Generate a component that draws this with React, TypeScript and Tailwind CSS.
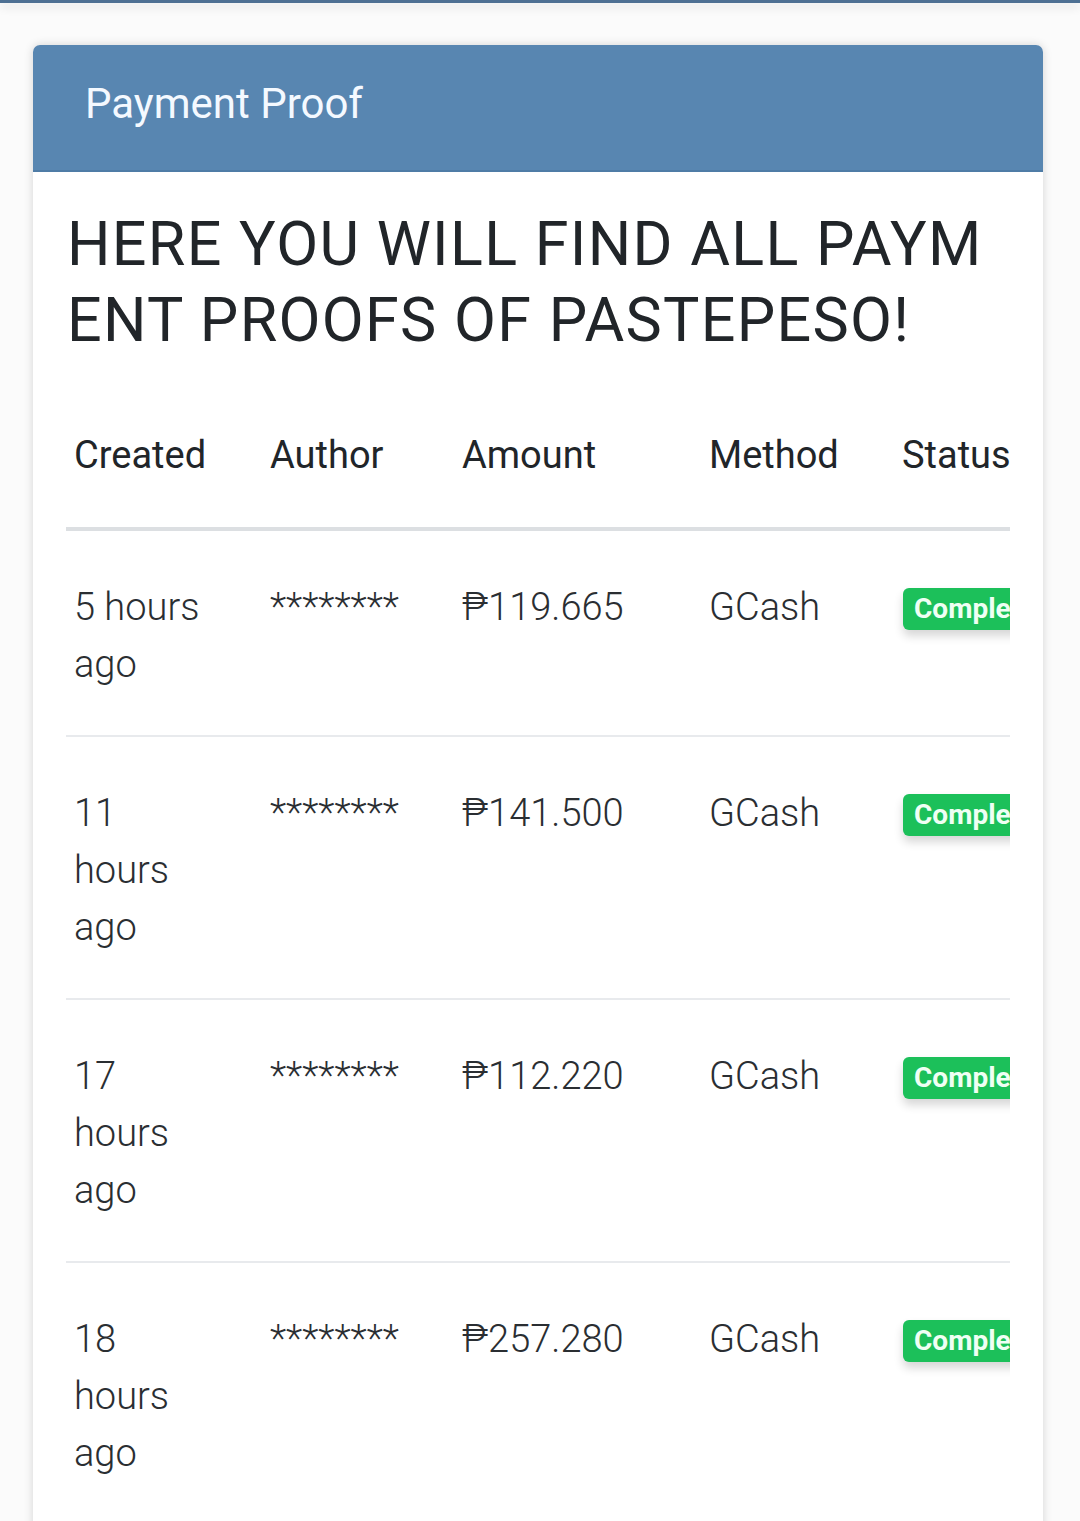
import React from 'react';

interface ProofRow {
  created: string;
  author: string;
  amount: string;
  method: string;
  status: string;
}

const rows: ProofRow[] = [
  { created: '5 hours ago', author: '********', amount: '₱119.665', method: 'GCash', status: 'Completed' },
  { created: '11 hours ago', author: '********', amount: '₱141.500', method: 'GCash', status: 'Completed' },
  { created: '17 hours ago', author: '********', amount: '₱112.220', method: 'GCash', status: 'Completed' },
  { created: '18 hours ago', author: '********', amount: '₱257.280', method: 'GCash', status: 'Completed' },
];

const font = { fontFamily: 'Roboto, "Noto Sans", "DejaVu Sans", sans-serif' };

function StatusBadge({ label }: { label: string }) {
  return (
    <span className="inline-block rounded-[6px] bg-[#1cc05a] px-[11px] py-[7px] align-top text-[28px] font-bold leading-none text-[#effff4] shadow-[0_6px_10px_rgba(0,0,0,0.16)]">
      {label}
    </span>
  );
}

export default function App() {
  return (
    <div className="min-h-[1521px] overflow-hidden bg-[#fbfbfb]" style={font}>
      <div className="h-[3px] bg-[#4e7093] shadow-[0_4px_10px_rgba(0,0,0,0.14)]" />

      <div className="ml-[33px] mt-[42px] w-[1010px] overflow-hidden rounded-t-[7px] bg-white shadow-[0_0_10px_rgba(0,0,0,0.16)]">
        <div className="flex h-[127px] items-center border-b-2 border-[#4f7ca6] bg-[#5886b1] pb-[7px] pl-[52px]">
          <h2 className="text-[42px] leading-none text-[#f4f9ff]">Payment Proof</h2>
        </div>

        <div className="px-[33px] pt-[34px] pb-[40px]">
          <h1 className="mb-[22px] break-all pl-[1px] text-[61px] leading-[76px] tracking-[1.3px] text-[#212529]">
            HERE YOU WILL FIND ALL PAYMENT PROOFS OF PASTEPESO!
          </h1>

          <div className="w-[944px] overflow-hidden">
            <table className="w-[1018px] table-fixed border-collapse text-[38px] leading-[57px] text-[#212529]">
              <colgroup>
                <col className="w-[196px]" />
                <col className="w-[192px]" />
                <col className="w-[247px]" />
                <col className="w-[193px]" />
                <col className="w-[190px]" />
              </colgroup>
              <thead>
                <tr className="border-b-4 border-[#dcdfe2]">
                  {['Created', 'Author', 'Amount', 'Method', 'Status'].map((h) => (
                    <th key={h} className="pl-[8px] pr-[10px] pt-[47px] pb-[43px] text-left align-bottom font-normal">
                      {h}
                    </th>
                  ))}
                </tr>
              </thead>
              <tbody className="font-light text-[#2a2e32]">
                {rows.map((r, i) => (
                  <tr key={i} className="border-b-2 border-[#e8eaed]">
                    <td className="pl-[8px] pr-[10px] pt-[48px] pb-[42px] align-top">
                      <div className="w-[135px]">{r.created}</div>
                    </td>
                    <td className="pl-[8px] pr-[10px] pt-[48px] pb-[42px] align-top">{r.author}</td>
                    <td className="pl-[8px] pr-[10px] pt-[48px] pb-[42px] align-top">{r.amount}</td>
                    <td className="pl-[8px] pr-[10px] pt-[48px] pb-[42px] align-top">{r.method}</td>
                    <td className="pl-[9px] pr-[9px] pt-[45px] pb-[45px] align-top">
                      <span className="inline-block pt-[12px]">
                        <StatusBadge label={r.status} />
                      </span>
                    </td>
                  </tr>
                ))}
              </tbody>
            </table>
          </div>
        </div>
      </div>
    </div>
  );
}
